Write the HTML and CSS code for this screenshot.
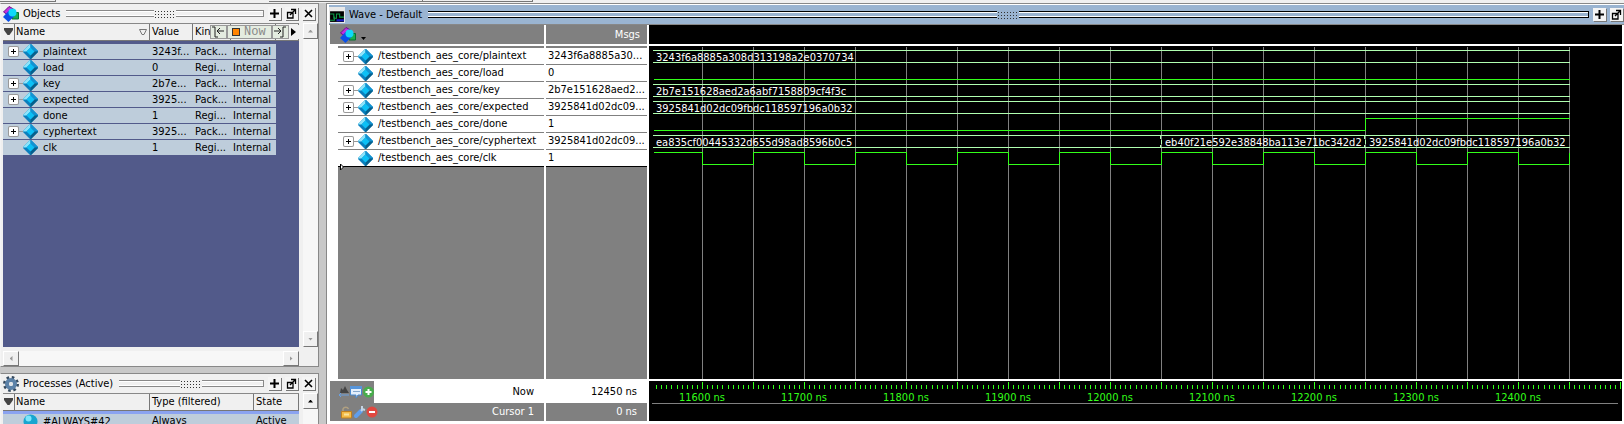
FILE: index.html
```html
<!DOCTYPE html>
<html lang="en">
<head>
<meta charset="utf-8">
<title>Wave - Default</title>
<link rel="stylesheet" href="styles.css">
</head>
<body>
<svg class="defs" width="0" height="0" aria-hidden="true">
  <defs>
    <symbol id="gem" viewBox="0 0 15 15"><path d="M7 0H8L15 7V8L8 15H7L0 8V7Z" fill="#0a7fbd"/><path d="M7 0H7.500V3.500L3.500 7.500H0V7Z" fill="#8be4fb"/><path d="M7.500 0H8L15 7V7.500H11.500L7.500 3.500Z" fill="#1293d2"/><path d="M15 7.500V8L8 15H7.500V11.500L11.500 7.500Z" fill="#06608c"/><path d="M7.500 3.500L11.500 7.500L7.500 11.500L3.500 7.500Z" fill="#0cc0f5"/></symbol>
    <symbol id="shapes" viewBox="0 0 16 16"><path d="M6 .5L10.500 3L5 9L.5 6Z" fill="#c030e0" stroke="#70108a"/><path d="M9 6.500H15.500V13H9Z" fill="#18b050" stroke="#087030"/><path d="M5.500 5L11.500 10L5.500 16L0 11Z" fill="#0a50e8"/><circle cx="9.500" cy="6.500" r="4" fill="#10d8f8"/></symbol>
    <symbol id="plus" viewBox="0 0 13 13"><path d="M6.500 2V11M2 6.500H11" stroke="#000" stroke-width="2"/></symbol>
    <symbol id="undock" viewBox="0 0 13 13"><path d="M2.500 5.500H8V11H2.500ZM6 2.500H10.500V7M10.500 2.500L5 8" fill="none" stroke="#000" stroke-width="1.300"/></symbol>
    <symbol id="close" viewBox="0 0 13 13"><path d="M3 3L10 10M10 3L3 10" stroke="#000" stroke-width="1.600"/></symbol>
    <symbol id="down" viewBox="0 0 9 8"><path d="M0 0H9V2L5.500 7H3.500L0 2Z" fill="#444"/></symbol>
    <symbol id="gear" viewBox="0 0 16 16"><circle cx="8" cy="8" r="6.500" fill="none" stroke="#35495d" stroke-width="3" stroke-dasharray="2.500 2.600"/><circle cx="8" cy="8" r="4" fill="none" stroke="#5c82a8" stroke-width="4"/><circle cx="8" cy="8" r="2" fill="#e0e4e8"/></symbol>
  </defs>
</svg>
<div class="topstrip"><i></i><i></i><i></i></div>
<main class="desk">
  <div class="dock">
    <section class="panel objects">
      <header class="bar"><svg class="picon"><use href="#shapes"/></svg><h2>Objects</h2><span class="grip"><i></i></span><button aria-label="Zoom"><svg><use href="#plus"/></svg></button><button aria-label="Undock"><svg><use href="#undock"/></svg></button><button aria-label="Close"><svg><use href="#close"/></svg></button></header>
      <div class="body">
        <div class="list">
          <table>
            <colgroup><col class="c1"><col class="c2"><col class="c3"><col class="c4"><col></colgroup>
            <thead><tr><th><span class="name"><svg class="arrow"><use href="#down"/></svg><span>Name</span><svg class="sort" viewBox="0 0 8 7"><path d="M.5.5H7.500L5 5.500H3Z" fill="none" stroke="#777"/></svg></span></th><th>Value</th><th>Kind</th><th></th><th></th></tr></thead>
            <tbody>
              <tr><td><span class="item"><button class="exp" aria-label="Expand plaintext"></button><svg><use href="#gem"/></svg>plaintext</span></td><td>3243f...</td><td>Pack...</td><td>Internal</td></tr>
              <tr><td><span class="item leaf"><svg><use href="#gem"/></svg>load</span></td><td>0</td><td>Regi...</td><td>Internal</td></tr>
              <tr><td><span class="item"><button class="exp" aria-label="Expand key"></button><svg><use href="#gem"/></svg>key</span></td><td>2b7e...</td><td>Pack...</td><td>Internal</td></tr>
              <tr><td><span class="item"><button class="exp" aria-label="Expand expected"></button><svg><use href="#gem"/></svg>expected</span></td><td>3925...</td><td>Pack...</td><td>Internal</td></tr>
              <tr><td><span class="item leaf"><svg><use href="#gem"/></svg>done</span></td><td>1</td><td>Regi...</td><td>Internal</td></tr>
              <tr><td><span class="item"><button class="exp" aria-label="Expand cyphertext"></button><svg><use href="#gem"/></svg>cyphertext</span></td><td>3925...</td><td>Pack...</td><td>Internal</td></tr>
              <tr><td><span class="item leaf"><svg><use href="#gem"/></svg>clk</span></td><td>1</td><td>Regi...</td><td>Internal</td></tr>
            </tbody>
          </table>
          <div class="nowtools"><button aria-label="Previous"><svg viewBox="0 0 14 12"><path d="M1 1H4V11H7M6 5H13M9 2L6 5L9 8" fill="none" stroke="#222"/></svg></button><button class="now"><i></i>Now</button><button aria-label="Next"><svg viewBox="0 0 14 12"><path d="M13 1H10V11H7M1 5H8M5 2L8 5L5 8" fill="none" stroke="#222"/></svg></button><button class="more" aria-label="More"><svg viewBox="0 0 8 12"><path d="M2 2V10L7 6Z"/></svg></button></div>
        </div>
        <div class="vscroll"><button aria-label="Scroll up" class="up off"></button><button aria-label="Scroll down" class="dn off"></button></div>
        <div class="hscroll"><button aria-label="Scroll left" class="lf off"></button><button aria-label="Scroll right" class="rt off"></button></div>
      </div>
    </section>
    <section class="panel processes">
      <header class="bar"><svg class="picon"><use href="#gear"/></svg><h2>Processes (Active)</h2><span class="grip"><i></i></span><button aria-label="Zoom"><svg><use href="#plus"/></svg></button><button aria-label="Undock"><svg><use href="#undock"/></svg></button><button aria-label="Close"><svg><use href="#close"/></svg></button></header>
      <div class="body">
        <div class="list">
          <table>
            <colgroup><col class="c1"><col class="p2"><col></colgroup>
            <thead><tr><th><span class="name"><svg class="arrow"><use href="#down"/></svg><span>Name</span></span></th><th>Type (filtered)</th><th>State</th></tr></thead>
            <tbody><tr><td><span class="item leaf"><svg viewBox="0 0 15 15"><circle cx="7.500" cy="7.500" r="7" fill="#17a6d0"/><circle cx="5.500" cy="4.500" r="3" fill="#7ce6fa"/></svg>#ALWAYS#42</span></td><td>Always</td><td>Active</td></tr></tbody>
          </table>
        </div>
        <div class="vscroll"><button aria-label="Scroll up" class="up"></button></div>
      </div>
    </section>
  </div>
  <section class="wave">
    <header class="bar"><svg class="picon" viewBox="0 0 15 15"><path d="M0 0H15V15H0Z" fill="#e8e8e8"/><path d="M1 4H14V14H1Z"/><path d="M1 6.500H4.500V10.500H7V6.500H10V9.500H14M1 12.500H5V9" fill="none" stroke="#0c9a48"/><path d="M7 12.500H14" stroke="#1818c8" stroke-width="2"/></svg><h2>Wave - Default</h2><span class="grip"><i></i></span><button aria-label="Zoom"><svg><use href="#plus"/></svg></button><button aria-label="Undock"><svg><use href="#undock"/></svg></button></header>
    <div class="panes">
      <div class="head tools"><svg class="picon"><use href="#shapes"/></svg><svg class="caret" viewBox="0 0 5 3"><path d="M0 0H5L2.500 3Z"/></svg></div>
      <div class="head msgs">Msgs</div>
      <div class="head black"></div>
      <div class="col names">
        <ul>
          <li class="item"><button class="exp" aria-label="Expand plaintext"></button><svg><use href="#gem"/></svg>/testbench_aes_core/plaintext</li>
          <li class="item leaf"><svg><use href="#gem"/></svg>/testbench_aes_core/load</li>
          <li class="item"><button class="exp" aria-label="Expand key"></button><svg><use href="#gem"/></svg>/testbench_aes_core/key</li>
          <li class="item"><button class="exp" aria-label="Expand expected"></button><svg><use href="#gem"/></svg>/testbench_aes_core/expected</li>
          <li class="item leaf"><svg><use href="#gem"/></svg>/testbench_aes_core/done</li>
          <li class="item"><button class="exp" aria-label="Expand cyphertext"></button><svg><use href="#gem"/></svg>/testbench_aes_core/cyphertext</li>
          <li class="item leaf"><svg><use href="#gem"/></svg>/testbench_aes_core/clk</li>
        </ul>
        <svg class="insert" viewBox="0 0 4 8"><path d="M.5 1V7L3.500 4Z" fill="#fff" stroke="#000"/></svg>
      </div>
      <div class="col values">
        <ul><li>3243f6a8885a30...</li><li>0</li><li>2b7e151628aed2...</li><li>3925841d02dc09...</li><li>1</li><li>3925841d02dc09...</li><li>1</li></ul>
      </div>
      <div class="col black plot"><svg id="plot" role="img" aria-label="Signal waveforms"></svg></div>
      <div class="foot labels">
        <div class="frow now"><span class="icons"><svg viewBox="0 0 36 14"><path d="M2 8L3 3L5 5L7 1L9 5L11 8Z" fill="#444"/><path d="M1 10H11M3 8L1 10L3 12" stroke="#6aa0e0" fill="none"/><path d="M12.500 1.500H23.500V10H20L18 13V10H12.500Z" fill="#e4effc" stroke="#4b8ad0"/><path d="M12 1H24V4H12Z" fill="#5795da"/><path d="M15 6.500H22" stroke="#85a8ce"/><circle cx="30.500" cy="7" r="5.500" fill="#48ad4c"/><path d="M30.500 4V10M27.500 7H33.500" stroke="#fff" stroke-width="2"/></svg></span><span>Now</span></div>
        <div class="frow cur"><span class="icons"><svg viewBox="0 0 40 14"><path d="M5 6V4A3 3 0 0 1 10.500 4" stroke="#b0a080" stroke-width="1.500" fill="none"/><path d="M3.500 6.500H13.500V13H3.500Z" fill="#f4bb48" stroke="#c08020"/><path d="M6 9.500H11" stroke="#fbe49c" stroke-width="2"/><path d="M18 11L23 6" stroke="#5f9eed" stroke-width="4" stroke-linecap="round"/><path d="M23 6L25 4M24 1L24 4L27 5" stroke="#c4d4e4" stroke-width="2" fill="none"/><circle cx="34" cy="7" r="5.500" fill="#e04840"/><path d="M31 7H37" stroke="#fff" stroke-width="2"/></svg></span><span>Cursor 1</span></div>
      </div>
      <div class="foot"><div class="frow now">12450 ns</div><div class="frow cur">0 ns</div></div>
      <div class="foot black ruler"><svg id="ruler" role="img" aria-label="Time ruler"></svg></div>
    </div>
  </section>
</main>
<script src="wave.js"></script>
</body>
</html>
```
FILE: styles.css
```css
* { box-sizing: border-box; }
body { margin: 0; height: 100vh; overflow: hidden; display: flex; flex-direction: column; background: #c8c8c8; color: #000; font: 11px/14px "DejaVu Sans Condensed", "DejaVu Sans", sans-serif; }
button { margin: 0; padding: 0; border: 0; font: inherit; flex: none; }
h2 { margin: 0; font-size: 11px; font-weight: normal; white-space: nowrap; }
ul { margin: 0; padding: 0; list-style: none; }
svg { display: block; flex: none; }
.defs { position: absolute; }
.topstrip { flex: none; height: 3px; display: flex; background: #f0f0f0; }
.topstrip i { height: 2px; border-bottom: 1px solid #777; border-right: 1px solid #777; width: 56px; }
.topstrip i:nth-child(2) { margin-left: 213px; width: 154px; }
.topstrip i:nth-child(3) { width: 110px; }
.desk { flex: 1; min-height: 0; display: grid; grid-template-columns: 319px minmax(0, 1fr); column-gap: 7px; }
.dock { display: grid; grid-template-rows: 364px minmax(0, 1fr); row-gap: 6px; min-height: 0; }
.panel { border: 1px solid #888; border-left-color: #f4f4f4; background: #f0f0f0; padding-left: 2px; display: flex; flex-direction: column; min-height: 0; }
.processes { border-bottom: 0; }
.bar { flex: none; height: 19px; display: flex; align-items: center; gap: 4px; padding-right: 3px; }
.picon { width: 16px; height: 16px; }
.grip { flex: 1; height: 7px; margin-left: 2px; border: solid #888; border-width: 1px 1px 1px 0; display: flex; justify-content: center; background: linear-gradient(#fff 1px, transparent 1px 4px, #fff 4px); }
.grip i { width: 22px; height: 8px; margin-top: -1px; background: radial-gradient(circle, #333 0 1px, #f0f0f0 1px) 0 0 / 3px 3px; }
.bar button { width: 13px; height: 13px; background: #f4f4f4; box-shadow: 1px 1px 0 #777; }
.bar button svg { width: 13px; height: 13px; }
.body { flex: 1; min-height: 0; display: grid; grid-template-columns: minmax(0, 1fr) 15px; grid-template-rows: minmax(0, 1fr) 15px; gap: 4px; }
.list { position: relative; background: #525a8a; overflow: hidden; border-top: 1px solid #888; }
table { width: 100%; table-layout: fixed; border-collapse: separate; border-spacing: 0; }
.c1 { width: 147px; } .c2 { width: 43px; } .c3 { width: 38px; } .c4 { width: 45px; } .p2 { width: 104px; }
th { height: 17px; padding: 0 2px; text-align: left; font-weight: normal; background: #f0f0f0; border-right: 1px solid #777; border-bottom: 1px solid #777; white-space: nowrap; overflow: hidden; }
th:first-child { padding: 0; }
.name { display: flex; align-items: center; height: 16px; line-height: 16px; }
.arrow { width: 9px; height: 8px; margin: 0 1px; }
.name span { flex: 1; border-left: 1px solid #777; padding-left: 1px; }
.sort { width: 8px; height: 7px; margin-right: 2px; }
tbody::before { content: ""; display: block; height: 3px; }
td { height: 16px; padding: 0 2px; background: #becddb; border-bottom: 1px solid #525a8a; white-space: nowrap; overflow: hidden; }
td:first-child { padding: 0; }
.item { display: flex; align-items: center; height: 15px; padding-left: 6px; }
.item svg { width: 15px; height: 15px; margin-right: 5px; }
.item.leaf { padding-left: 20px; }
.exp { position: relative; width: 9px; height: 9px; margin-right: 5px; background: linear-gradient(#000, #000) center / 5px 1px no-repeat, linear-gradient(#000, #000) center / 1px 5px no-repeat, #fff; box-shadow: 0 0 0 1px #999; border-radius: 1px; }
.exp::after { content: ""; position: absolute; left: 10px; top: 4px; width: 4px; border-top: 1px solid #999; }
.nowtools { position: absolute; top: 1px; right: 0; height: 14px; display: flex; background: #f0f0f0; }
.nowtools button { width: 17px; height: 14px; background: #e4ece0; border: 1px solid #999; }
.nowtools svg { width: 14px; height: 12px; }
.nowtools .now { width: 45px; display: flex; align-items: center; gap: 4px; padding-left: 4px; color: #888; font: 12px/12px "Liberation Mono", monospace; }
.nowtools .now i { width: 8px; height: 8px; background: #ff8400; border: 1px solid #333; }
.nowtools .more { width: 10px; background: #f0f0f0; border: 0; }
.nowtools .more svg { width: 8px; }
.vscroll, .hscroll { display: flex; justify-content: space-between; background: #f7f7f7; }
.vscroll { flex-direction: column; }
.vscroll button, .hscroll button { width: 15px; height: 16px; background: #f0f0f0; border: 1px solid #777; border-top-color: #fff; border-left-color: #fff; display: grid; place-items: center; }
.hscroll button { width: 16px; height: 15px; }
.vscroll button::after, .hscroll button::after { content: ""; width: 5px; height: 3px; background: #000; clip-path: polygon(0 100%, 50% 0, 100% 100%); }
.vscroll .off::after, .hscroll .off::after { background: #999; }
.vscroll .dn::after { clip-path: polygon(0 0, 50% 100%, 100% 0); }
.hscroll button::after { width: 3px; height: 5px; clip-path: polygon(100% 0, 0 50%, 100% 100%); }
.hscroll .rt::after { clip-path: polygon(0 0, 100% 50%, 0 100%); }
.processes .body { grid-template-rows: minmax(0, 1fr); }
.processes .list { background: #8aa3f0; }
.processes td { line-height: 13px; vertical-align: top; }
.wave { border: 1px solid #888; border-right: 0; border-bottom: 0; background: #fff; padding: 1px 0 0 2px; display: flex; flex-direction: column; min-width: 0; min-height: 0; }
.wave .bar { background: #9ab4d1; padding-right: 1px; }
.wave .grip { border-color: #000; }
.wave .grip i { background-image: radial-gradient(circle, #333 0 1px, #9ab4d1 1px); }
.panes { flex: 1; min-height: 0; display: grid; grid-template-columns: 214px 101px minmax(0, 1fr); grid-template-rows: 19px minmax(0, 1fr) 40px; gap: 2px; padding: 0 2px 3px 1px; border-top: 1px solid #888; }
.head, .col, .foot { background: #808080; min-width: 0; overflow: hidden; }
.panes .black { background: #000; }
.tools { display: flex; align-items: center; gap: 5px; padding-left: 10px; }
.caret { width: 5px; height: 3px; margin-top: 8px; }
.msgs { color: #fff; text-align: right; padding: 3px 7px 0 0; }
.names { border-left: 8px solid #fff; position: relative; }
.col ul { margin-top: 2px; }
.col li { height: 17px; background: #fff; border-bottom: 1px solid #808080; white-space: nowrap; }
.col li:last-child { border-color: #000; }
.values li { padding-left: 2px; overflow: hidden; line-height: 16px; }
.insert { position: absolute; left: 2px; top: 117px; width: 4px; height: 8px; }
.foot { display: flex; flex-direction: column; }
.frow { flex: 1; display: flex; align-items: center; justify-content: flex-end; padding-right: 10px; }
.frow.now { flex: none; height: 22px; background: #fff; }
.frow.cur { color: #fff; }
.icons { align-self: stretch; display: flex; align-items: center; background: #808080; padding-left: 8px; width: 44px; margin-right: auto; }
.icons svg { width: 36px; height: 14px; overflow: visible; }
.cur .icons svg { width: 40px; }
.plot svg, .ruler svg { width: 100%; height: 100%; overflow: hidden; shape-rendering: crispEdges; }
.grid { stroke: #808080; }
.bus { stroke: #b0ffb0; fill: none; }
.bit { stroke: #32ff19; fill: none; }
.val { fill: #fff; font-size: 11px; }
.time { fill: #32ff19; font-size: 11px; text-anchor: middle; }
```
FILE: wave.js
```js
const NS = "http://www.w3.org/2000/svg";
const STEP = 51, FIRST = 53, LEFT = 3, END = 920;
function add(parent, tag, attrs, text) {
  const e = document.createElementNS(NS, tag);
  for (const k in attrs) e.setAttribute(k, attrs[k]);
  if (text) e.textContent = text;
  parent.appendChild(e);
}
const plot = document.getElementById("plot");
const line = (cls, d) => add(plot, "path", { class: cls, d, transform: "translate(.5 .5)" });
for (let i = 0; i < 18; i++) line("grid", `M${FIRST + i * STEP} 0V600`);
const bus = y => line("bus", `M${LEFT} ${y}H${END}M${LEFT} ${y + 12}H${END}`);
[4, 38, 55, 89].forEach(bus);
line("bit", `M4 33H${END}`);
const done = FIRST + 13 * STEP, mid = FIRST + 9 * STEP;
line("bit", `M4 84H${done}V72H${END}`);
[mid, done].forEach(x => line("bus", `M${x - 1} 89V92M${x} 93V97M${x - 1} 98V101`));
let d = "M4 106";
for (let i = 0; i < 18; i++) d += `H${FIRST + i * STEP}V${i % 2 ? 106 : 118}`;
line("bit", d);
const val = (x, y, t) => add(plot, "text", { class: "val", x, y }, t);
val(7, 15, "3243f6a8885a308d313198a2e0370734");
val(7, 49, "2b7e151628aed2a6abf7158809cf4f3c");
val(7, 66, "3925841d02dc09fbdc118597196a0b32");
val(7, 100, "ea835cf00445332d655d98ad8596b0c5");
val(mid + 4, 100, "eb40f21e592e38848ba113e71bc342d2");
val(done + 4, 100, "3925841d02dc09fbdc118597196a0b32");
const ruler = document.getElementById("ruler");
for (let i = -9; i < 181; i++) {
  const x = Math.round(FIRST + i * STEP / 10);
  add(ruler, "path", { class: "bit", transform: "translate(.5 .5)", d: i % 10 ? `M${x} 3V7` : `M${x} 0V7` });
}
for (let i = 0; i < 9; i++) add(ruler, "text", { class: "time", x: FIRST + i * 2 * STEP, y: 20 }, `${11600 + i * 100} ns`);
add(ruler, "path", { class: "grid", d: "M3 22.5H969" });
```
